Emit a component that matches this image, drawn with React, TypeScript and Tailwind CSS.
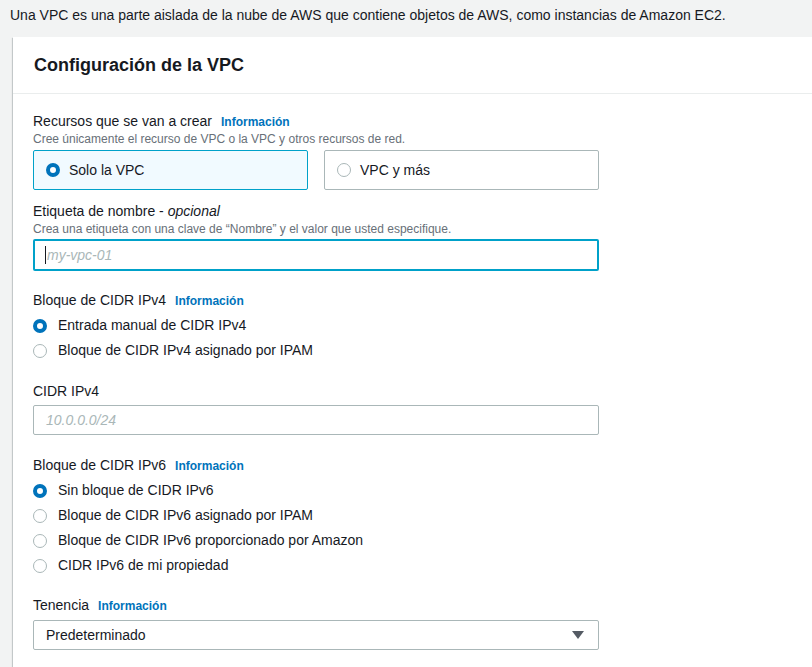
const font = { fontFamily: '"Liberation Sans", Arial, sans-serif' }

function Radio({ checked }: { checked: boolean }) {
  return checked ? (
    <span className="block w-[14px] h-[14px] shrink-0 rounded-full border-[4px] border-[#0073bb] bg-white" />
  ) : (
    <span className="block w-[14px] h-[14px] shrink-0 rounded-full border border-[#aab7b8] bg-white" />
  )
}

function Label({ text, info, optional }: { text: string; info?: boolean; optional?: boolean }) {
  return (
    <div className="flex items-baseline h-5 text-[14px] leading-5 text-[#16191f]">
      {optional ? (
        <span>
          {text} - <i>opcional</i>
        </span>
      ) : (
        <span>{text}</span>
      )}
      {info && <span className="ml-[9px] text-[12px] font-bold text-[#0073bb]">Información</span>}
    </div>
  )
}

function RadioRow({ label, checked }: { label: string; checked?: boolean }) {
  return (
    <div className="flex items-center h-[25px] gap-[11px] text-[14px] text-[#16191f]">
      <Radio checked={!!checked} />
      <span>{label}</span>
    </div>
  )
}

const ipv6Options = [
  'Sin bloque de CIDR IPv6',
  'Bloque de CIDR IPv6 asignado por IPAM',
  'Bloque de CIDR IPv6 proporcionado por Amazon',
  'CIDR IPv6 de mi propiedad',
]

export default function App() {
  return (
    <div className="min-h-[667px] bg-[#f2f3f3] overflow-hidden" style={font}>
      <div className="pt-[5px] pl-[10px] text-[14px] leading-5 text-[#16191f]">
        Una VPC es una parte aislada de la nube de AWS que contiene objetos de AWS, como instancias de Amazon EC2.
      </div>

      <div className="mt-[12px] ml-[13px] -mr-[20px] bg-white shadow-[0_1px_1px_0_rgba(0,28,36,0.3),-1px_1px_1px_0_rgba(0,28,36,0.15)] min-h-[640px]">
        <div className="h-[57px] flex items-center pl-[21px] border-b border-[#eaeded]">
          <h2 className="text-[18px] leading-[22px] font-bold text-[#16191f]">Configuración de la VPC</h2>
        </div>

        <div className="pl-[20px] pt-[17px] w-[586px]">
          <Label text="Recursos que se van a crear" info />
          <div className="text-[12px] leading-4 text-[#687078]">
            Cree únicamente el recurso de VPC o la VPC y otros recursos de red.
          </div>
          <div className="mt-[3px] grid grid-cols-2 gap-4">
            <div className="h-[40px] flex items-center gap-[9px] px-3 rounded-[2px] border border-[#00a1c9] bg-[#f1faff] text-[14px] text-[#16191f]">
              <Radio checked />
              <span>Solo la VPC</span>
            </div>
            <div className="h-[40px] flex items-center gap-[9px] px-3 rounded-[2px] border border-[#aab7b8] bg-white text-[14px] text-[#16191f]">
              <Radio checked={false} />
              <span>VPC y más</span>
            </div>
          </div>

          <div className="mt-[11px]">
            <Label text="Etiqueta de nombre" optional />
          </div>
          <div className="text-[12px] leading-4 text-[#687078]">
            Crea una etiqueta con una clave de “Nombre” y el valor que usted especifique.
          </div>
          <div className="mt-[2px] h-[32px] flex items-center pl-[10px] rounded-[2px] border-2 border-[#00a1c9] text-[14px]">
            <span className="block w-px h-[18px] bg-[#16191f]" />
            <span className="ml-px italic text-[#aab7b8]">my-vpc-01</span>
          </div>

          <div className="mt-[19px]">
            <Label text="Bloque de CIDR IPv4" info />
          </div>
          <div className="mt-[3px]">
            <RadioRow label="Entrada manual de CIDR IPv4" checked />
            <RadioRow label="Bloque de CIDR IPv4 asignado por IPAM" />
          </div>

          <div className="mt-[18px]">
            <Label text="CIDR IPv4" />
          </div>
          <div className="mt-[4px] h-[30px] flex items-center pl-3 rounded-[2px] border border-[#aab7b8] text-[14px] italic text-[#aab7b8]">
            10.0.0.0/24
          </div>

          <div className="mt-[20px]">
            <Label text="Bloque de CIDR IPv6" info />
          </div>
          <div className="mt-[3px]">
            {ipv6Options.map((o, i) => (
              <RadioRow key={o} label={o} checked={i === 0} />
            ))}
          </div>

          <div className="mt-[17px]">
            <Label text="Tenencia" info />
          </div>
          <div className="mt-[5px] h-[30px] flex items-center justify-between pl-3 pr-[14px] rounded-[2px] border border-[#aab7b8] text-[14px] text-[#16191f]">
            <span>Predeterminado</span>
            <svg width="12" height="8" viewBox="0 0 12 8">
              <path d="M0 0h12L6 8z" fill="#545b64" />
            </svg>
          </div>
        </div>
      </div>
    </div>
  )
}
